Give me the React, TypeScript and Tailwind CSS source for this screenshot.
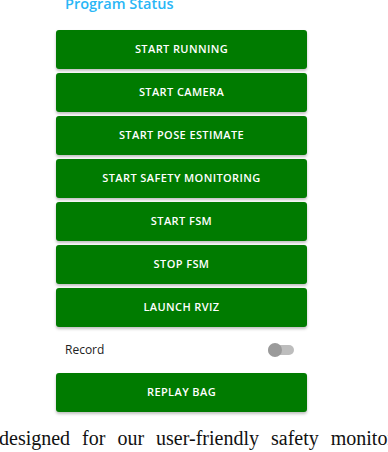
import { useState } from 'react';

const actions = [
  'Start Running',
  'Start Camera',
  'Start Pose Estimate',
  'Start Safety Monitoring',
  'Start FSM',
  'Stop FSM',
  'Launch RViz',
];

function ActionButton({ label }: { label: string }) {
  return (
    <button
      type="button"
      className="flex h-[39px] w-full items-center justify-center rounded-[3px] bg-[#007b00] text-[11px] font-semibold uppercase tracking-[0.4px] text-white shadow-[0_2px_3px_rgba(0,0,0,0.25)]"
    >
      {label}
    </button>
  );
}

export default function App() {
  const [record, setRecord] = useState(false);

  return (
    <div className="relative h-[452px] w-[388px] overflow-hidden bg-white font-['Open_Sans',sans-serif]">
      <h2 className="-mt-[5px] pl-[65px] text-[14.5px] font-semibold leading-[18px] text-[#29b6f6]">
        Program Status
      </h2>

      <div className="mt-[17px] ml-[56px] flex w-[251px] flex-col gap-[4px]">
        {actions.map((a) => (
          <ActionButton key={a} label={a} />
        ))}
      </div>

      <div className="ml-[56px] flex h-[46px] w-[251px] items-center justify-between pl-[9px] pr-[13px]">
        <span className="text-[12px] text-[#222]">Record</span>
        <button
          type="button"
          onClick={() => setRecord(!record)}
          className="relative h-[10px] w-[26px] rounded-full bg-[#bdbdbd]"
        >
          <span className="absolute -top-[2px] left-0 h-[14px] w-[14px] rounded-full bg-[#9a9a9a]" />
        </button>
      </div>

      <div className="ml-[56px] w-[251px]">
        <ActionButton label="Replay Bag" />
      </div>

      <p className="mt-[15px] -ml-[1px] whitespace-nowrap font-['Liberation_Serif',serif] text-[20px] leading-[22px] text-[#111] [word-spacing:7px]">
        designed for our user-friendly safety monitoring
      </p>
    </div>
  );
}
